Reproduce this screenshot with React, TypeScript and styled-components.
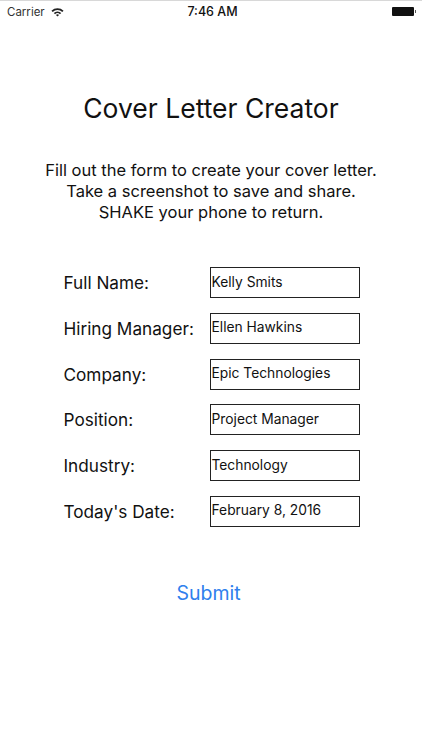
import React from "react";
import styled, { createGlobalStyle } from "styled-components";

const GlobalStyle = createGlobalStyle`
    html, body {
        margin: 0;
        padding: 0;
        background: #fff;
    }
    body {
        font-family: "Inter", "Liberation Sans", sans-serif;
        color: #111;
    }
`;

const fields = [
    { label: "Full Name:", value: "Kelly Smits" },
    { label: "Hiring Manager:", value: "Ellen Hawkins" },
    { label: "Company:", value: "Epic Technologies" },
    { label: "Position:", value: "Project Manager" },
    { label: "Industry:", value: "Technology" },
    { label: "Today's Date:", value: "February 8, 2016" },
];

export default function App() {
    return (
        <Screen>
            <GlobalStyle />
            <StatusBar>
                <Left>
                    <span>Carrier</span>
                    <svg width="13" height="10" viewBox="0 0 15 11">
                        <path d="M0.5 4 A10 10 0 0 1 14.5 4 L13 5.5 A8 8 0 0 0 2 5.5 Z" fill="#222" />
                        <path d="M3.2 6.6 A6 6 0 0 1 11.8 6.6 L10.3 8 A4 4 0 0 0 4.7 8 Z" fill="#222" />
                        <path d="M5.7 9 A2.6 2.6 0 0 1 9.3 9 L7.5 10.8 Z" fill="#222" />
                    </svg>
                </Left>
                <Clock>7:46 AM</Clock>
                <Battery />
            </StatusBar>
            <Title>Cover Letter Creator</Title>
            <Intro>
                Fill out the form to create your cover letter.
                <br />
                Take a screenshot to save and share.
                <br />
                SHAKE your phone to return.
            </Intro>
            <Form>
                {fields.map((field) => (
                    <Row key={field.label}>
                        <Label>{field.label}</Label>
                        <Input>{field.value}</Input>
                    </Row>
                ))}
            </Form>
            <Submit>Submit</Submit>
        </Screen>
    );
}

const Screen = styled.div`
    width: 422px;
    height: 750px;
    background: #fff;
    overflow: hidden;
    display: flex;
    flex-direction: column;
    align-items: center;
`;

const StatusBar = styled.div`
    width: 100%;
    height: 22px;
    box-sizing: border-box;
    border-top: 1px solid #d8d8d8;
    padding: 0 6px 0 7px;
    display: flex;
    align-items: center;
    justify-content: space-between;
`;

const Left = styled.div`
    display: flex;
    align-items: center;
    gap: 6px;
    width: 134px;
    font-size: 11.5px;
    color: #333;
`;

const Clock = styled.div`
    font-weight: 500;
    font-size: 12.5px;
`;

const Battery = styled.div`
    position: relative;
    width: 22px;
    height: 9px;
    margin-left: 108px;
    margin-right: 2px;
    background: #111;
    border-radius: 1px;

    &::after {
        content: "";
        position: absolute;
        right: -2px;
        top: 3px;
        width: 1px;
        height: 3px;
        background: #555;
    }
`;

const Title = styled.h1`
    margin: 70px 0 0;
    font-size: 26.5px;
    line-height: 32px;
    font-weight: 400;
`;

const Intro = styled.p`
    margin: 36px 0 0;
    font-size: 16.5px;
    line-height: 21px;
    text-align: center;
`;

const Form = styled.div`
    margin-top: 44px;
    display: flex;
    flex-direction: column;
    gap: 14.8px;
    width: 296px;
    padding-left: 1px;
`;

const Row = styled.div`
    display: flex;
    align-items: center;
    justify-content: space-between;
`;

const Label = styled.div`
    font-size: 17.2px;
`;

const Input = styled.div`
    width: 150px;
    height: 31px;
    box-sizing: border-box;
    border: 1px solid #222;
    padding: 0 0 2px 1px;
    display: flex;
    align-items: center;
    font-size: 13.8px;
`;

const Submit = styled.button`
    margin-top: 54px;
    margin-right: 5px;
    border: none;
    background: none;
    padding: 0;
    color: #2f80ed;
    font-family: inherit;
    font-size: 19.5px;
`;
